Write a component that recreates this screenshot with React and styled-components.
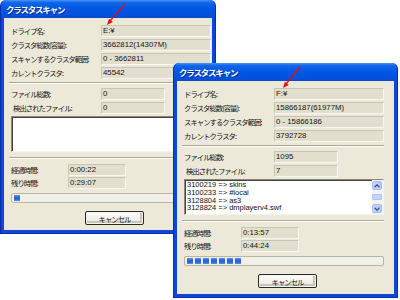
import React from 'react';
import styled, { createGlobalStyle } from 'styled-components';

const GlobalStyle = createGlobalStyle`
  html, body { margin: 0; padding: 0; background: #fff; }
  body { font-family: "Noto Sans CJK JP", "Liberation Sans", sans-serif; }
`;

const Desktop = styled.div`
  position: relative;
  width: 400px;
  height: 300px;
  overflow: hidden;
  background: #fff;
`;

const Frame = styled.div`
  position: absolute;
  left: ${p => p.$x}px;
  top: ${p => p.$y}px;
  width: ${p => p.$w}px;
  height: ${p => p.$h}px;
  box-sizing: border-box;
  display: flex;
  flex-direction: column;
  padding: 0 3px 3px;
  background: #0b47d9;
  border: 1px solid #0a2ea8;
  border-top: 0;
  border-radius: 6px 6px 0 0;
`;

const TitleBar = styled.div`
  height: 18px;
  margin: 0 -3px;
  padding-left: 5px;
  display: flex;
  align-items: center;
  border-radius: 6px 6px 0 0;
  background: linear-gradient(#4a95f5 0%, #1266ea 14%, #0056e4 50%, #0051dc 85%, #0a48cf 100%);
  color: #fff;
  font-size: 8.5px;
  font-weight: bold;
  letter-spacing: -1.2px;
  text-shadow: 1px 1px 0 #0a2c8c;
`;

const Body = styled.div`
  flex: 1;
  background: #ece9d8;
  padding: 6px 0 0 7px;
  display: flex;
  flex-direction: column;
  color: #141414;
`;

const Rows = styled.div`
  display: flex;
  flex-direction: column;
  gap: ${p => p.$gap}px;
  margin-top: ${p => p.$top || 0}px;
`;

const Row = styled.div`
  display: grid;
  grid-template-columns: ${p => p.$label}px ${p => p.$field}px;
  height: 13px;
  align-items: center;
`;

const Label = styled.span`
  padding-left: ${p => (p.$indent ? 2 : 0)}px;
  font-size: 7.4px;
  letter-spacing: -1px;
  white-space: nowrap;
  line-height: 13px;
`;

const Field = styled.div`
  box-sizing: border-box;
  height: 12px;
  padding-left: 1px;
  display: flex;
  align-items: center;
  background: #e2dfce;
  border-top: 1px solid #c8c5b5;
  border-left: 1px solid #c8c5b5;
  border-bottom: 1px solid #f8f7f1;
  border-right: 1px solid #f8f7f1;
  font-family: "Liberation Sans", "Noto Sans CJK JP", sans-serif;
  font-size: 7.8px;
  white-space: nowrap;
`;

const Separator = styled.div`
  width: 202px;
  margin: ${p => p.$top}px 0 0 -2px;
  border-top: 1px solid #aca899;
  border-bottom: 1px solid #fff;
`;

const ListBox = styled.div`
  box-sizing: border-box;
  width: 200px;
  height: 36px;
  margin-top: 2px;
  display: flex;
  background: #fff;
  border-top: 1px solid #8d8a7c;
  border-left: 1px solid #8d8a7c;
  border-bottom: 1px solid #f4f3ee;
  border-right: 1px solid #f4f3ee;
  box-shadow: inset 1px 1px 0 #44433d;
`;

const ListLines = styled.div`
  flex: 1;
  padding: 1px 0 0 2px;
  font-family: "Liberation Sans", sans-serif;
  font-size: 7.5px;
  line-height: 7.8px;
  color: #111;
  white-space: nowrap;
`;

const ScrollBar = styled.div`
  width: 10px;
  display: flex;
  flex-direction: column;
  justify-content: space-between;
  background: #f4f4ee;
  padding: 1px 1px 1px 0;
`;

const ScrollButton = styled.div`
  height: 9px;
  display: flex;
  align-items: center;
  justify-content: center;
  border-radius: 2px;
  background: linear-gradient(90deg, #c6d6fb, #b4c8f6);
  border: 1px solid #a8bef0;
  box-sizing: border-box;
`;

const Thumb = styled.div`
  height: 4px;
  border-radius: 1px;
  background: #c3d3fa;
  border: 1px solid #b0c4f2;
`;

const Progress = styled.div`
  box-sizing: border-box;
  width: 200px;
  height: 10px;
  margin-top: 4px;
  padding: 1px 2px;
  display: flex;
  gap: 2px;
  background: #f1f0e8;
  border: 1px solid #b8b5a6;
  border-radius: 2px;
`;

const Block = styled.div`
  width: 6px;
  height: 100%;
  background: linear-gradient(#5b8ff0, #2763d6 45%, #2a66d8 70%, #5d90ef);
`;

const ButtonRow = styled.div`
  margin-top: 8px;
  padding-left: 74px;
  display: flex;
`;

const Button = styled.div`
  box-sizing: border-box;
  width: 59px;
  height: 14px;
  display: flex;
  align-items: center;
  justify-content: center;
  border: 1px solid #2a2a2a;
  border-radius: 2px;
  background: linear-gradient(#fdfdfb, #ecebe4 80%, #d8d5c8);
  box-shadow: inset 0 0 0 1px #f4f3ee, inset -1px -1px 0 2px #c9c6b8;
  font-size: 7.4px;
  letter-spacing: -1px;
`;

const Overlay = styled.svg`
  position: absolute;
  left: 0;
  top: 0;
  pointer-events: none;
`;

const Chevron = ({ down }) => (
  <svg width="6" height="4" viewBox="0 0 6 4">
    <path d={down ? 'M0.5 0.8 L3 3.2 L5.5 0.8' : 'M0.5 3.2 L3 0.8 L5.5 3.2'} fill="none" stroke="#34508e" strokeWidth="1.2" />
  </svg>
);

const windows = [
  {
    x: 0, y: 0, w: 216, h: 234,
    drive: 'E:¥', total: '3662812(14307M)', range: '0 - 3662811', current: '45542',
    files: '0', found: '0', list: [], elapsed: '0:00:22', remain: '0:29:07', blocks: 1,
  },
  {
    x: 173, y: 63, w: 225, h: 235,
    drive: 'F:¥', total: '15866187(61977M)', range: '0 - 15866186', current: '3792728',
    files: '1095', found: '7',
    list: ['3100219 => skins', '3100233 => #local', '3128804 => as3', '3128824 => dmplayerv4.swf'],
    elapsed: '0:13:57', remain: '0:44:24', blocks: 7,
  },
];

const ScanWindow = ({ data }) => (
  <Frame $x={data.x} $y={data.y} $w={data.w} $h={data.h}>
    <TitleBar>クラスタスキャン</TitleBar>
    <Body>
      <Rows $gap={1}>
        <Row $label={90} $field={110}><Label>ドライブ名:</Label><Field>{data.drive}</Field></Row>
        <Row $label={90} $field={110}><Label>クラスタ総数(容量):</Label><Field>{data.total}</Field></Row>
        <Row $label={90} $field={110}><Label>スキャンするクラスタ範囲:</Label><Field>{data.range}</Field></Row>
        <Row $label={90} $field={110}><Label>カレントクラスタ:</Label><Field>{data.current}</Field></Row>
      </Rows>
      <Separator $top={3} />
      <Rows $gap={1} $top={3}>
        <Row $label={90} $field={64}><Label>ファイル総数:</Label><Field>{data.files}</Field></Row>
        <Row $label={90} $field={64}><Label $indent>検出されたファイル:</Label><Field>{data.found}</Field></Row>
      </Rows>
      <ListBox>
        <ListLines>
          {data.list.map(line => <div key={line}>{line}</div>)}
        </ListLines>
        {data.list.length > 0 && (
          <ScrollBar>
            <ScrollButton><Chevron /></ScrollButton>
            <Thumb />
            <ScrollButton><Chevron down /></ScrollButton>
          </ScrollBar>
        )}
      </ListBox>
      <Separator $top={5} />
      <Rows $gap={0} $top={4}>
        <Row $label={57} $field={58}><Label>経過時間:</Label><Field>{data.elapsed}</Field></Row>
        <Row $label={57} $field={58}><Label>残り時間:</Label><Field>{data.remain}</Field></Row>
      </Rows>
      <Progress>
        {Array.from({ length: data.blocks }, (_, i) => <Block key={i} />)}
      </Progress>
      <ButtonRow>
        <Button>キャンセル</Button>
      </ButtonRow>
    </Body>
  </Frame>
);

export default function App() {
  return (
    <Desktop>
      <GlobalStyle />
      {windows.map(w => <ScanWindow key={w.drive} data={w} />)}
      <Overlay width="400" height="300" viewBox="0 0 400 300">
        <line x1="125" y1="4" x2="110" y2="21" stroke="#e01010" strokeWidth="1.3" />
        <polygon points="107,25 112.8,22 109,18.8" fill="#e01010" />
        <line x1="300" y1="67" x2="286" y2="84" stroke="#e01010" strokeWidth="1.3" />
        <polygon points="283,88 288.7,84.9 284.9,81.7" fill="#e01010" />
      </Overlay>
    </Desktop>
  );
}
